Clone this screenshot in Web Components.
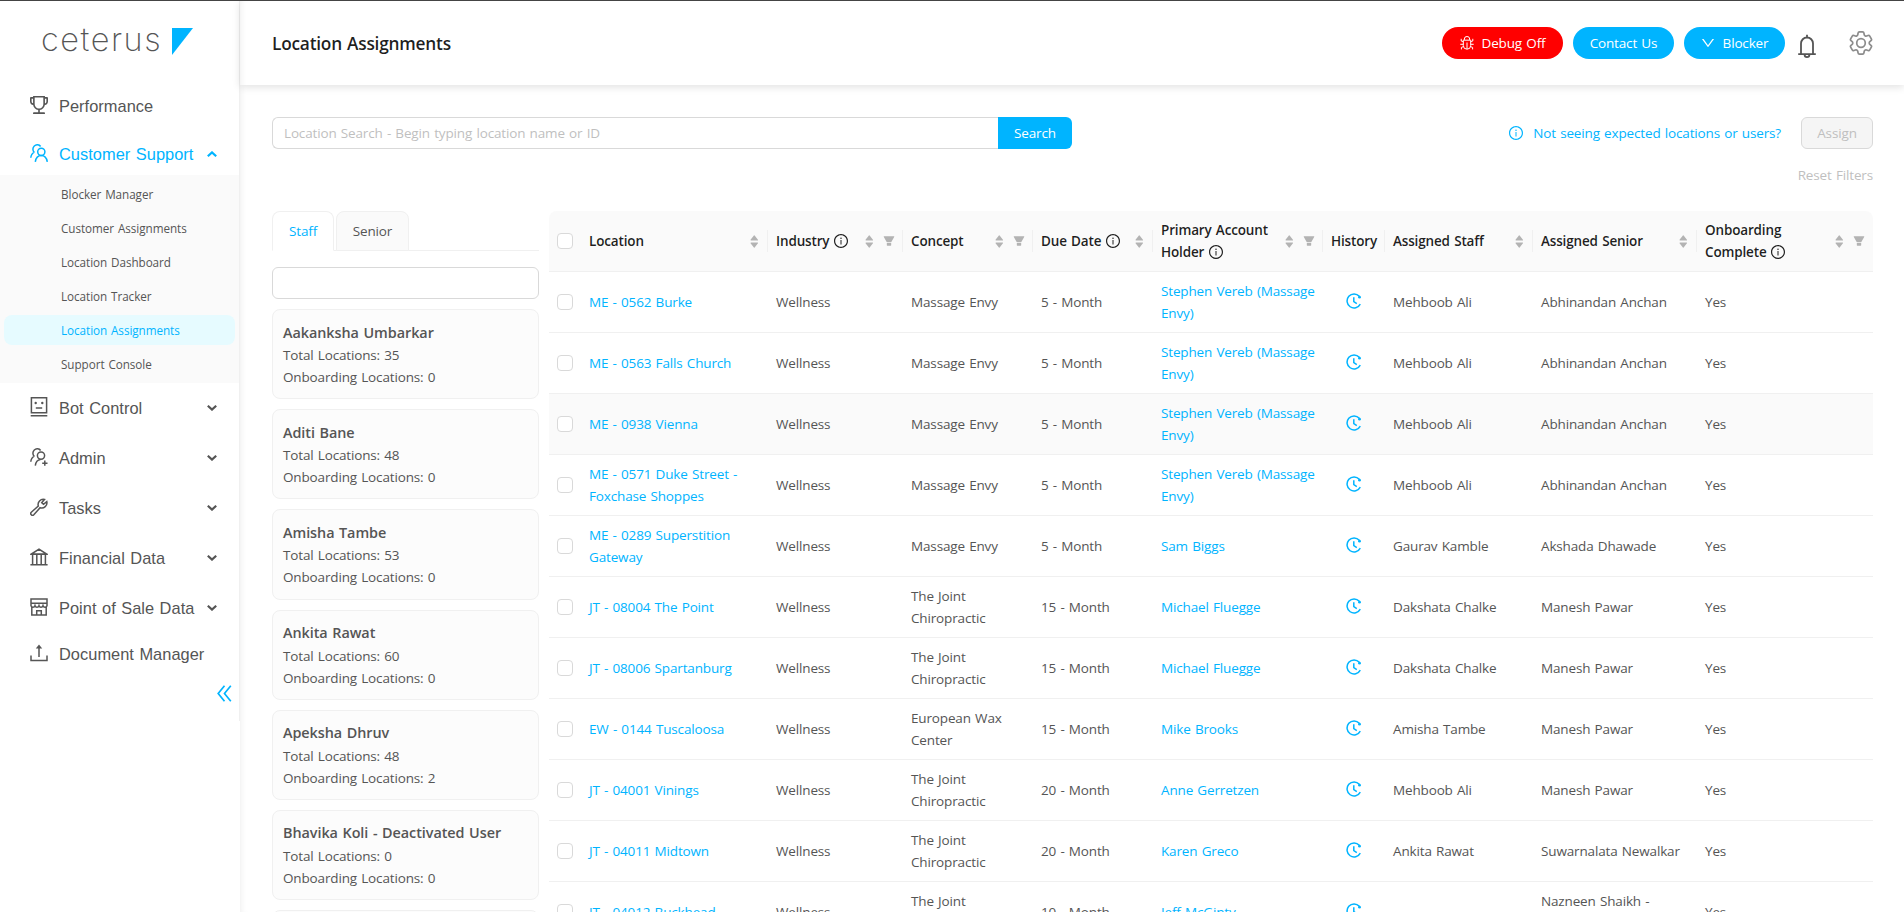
<!DOCTYPE html>
<html lang="en">
<head>
<meta charset="utf-8">
<title>Location Assignments</title>
<style>
  html, body {
    margin: 0;
    height: 100%;
  }
  body {
    overflow: hidden;
    background: #fff;
    color: #555;
    font-family: "Open Sans", "Noto Sans", sans-serif;
    font-size: 13.5px;
    line-height: 22px;
    letter-spacing: -0.15px;
    word-spacing: 0.9px;
    --primary: #00b4ff;
    --line: #f0f0f0;
    --border: #d9d9d9;
  }
</style>
</head>
<body>
<app-shell>
  <app-sidebar slot="sidebar">
    <nav-item icon="trophy" label="Performance" style="--h: 48px"></nav-item>
    <nav-item icon="users" label="Customer Support" arrow="up" active style="--h: 45px; --shift: 2px"></nav-item>
    <nav-submenu>
      <nav-subitem>Blocker Manager</nav-subitem>
      <nav-subitem>Customer Assignments</nav-subitem>
      <nav-subitem>Location Dashboard</nav-subitem>
      <nav-subitem>Location Tracker</nav-subitem>
      <nav-subitem selected>Location Assignments</nav-subitem>
      <nav-subitem>Support Console</nav-subitem>
    </nav-submenu>
    <nav-item icon="robot" label="Bot Control" arrow="down"></nav-item>
    <nav-item icon="useradd" label="Admin" arrow="down"></nav-item>
    <nav-item icon="wrench" label="Tasks" arrow="down"></nav-item>
    <nav-item icon="bank" label="Financial Data" arrow="down"></nav-item>
    <nav-item icon="shop" label="Point of Sale Data" arrow="down"></nav-item>
    <nav-item icon="upload" label="Document Manager" style="--h: 42px"></nav-item>
  </app-sidebar>

  <app-header slot="header" heading="Location Assignments">
    <pill-button icon="bug" style="--bg: #f00; --w: 121px; --gap: 8px">Debug Off</pill-button>
    <pill-button style="--w: 101px">Contact Us</pill-button>
    <pill-button icon="down" style="--w: 101px; --gap: 8px">Blocker</pill-button>
  </app-header>

  <search-bar></search-bar>
  <div class="content">
    <staff-panel></staff-panel>
    <location-table></location-table>
  </div>
</app-shell>

<script>
const ICONS = {
  trophy: ['112 112 800 800', '<path d="M868 160h-92v-40c0-4.4-3.6-8-8-8H256c-4.4 0-8 3.6-8 8v40h-92a44 44 0 00-44 44v148c0 81.7 60 149.6 138.2 162C265.6 630.2 359 721.8 476 734.5v105.2H280c-17.7 0-32 14.3-32 32V904c0 4.4 3.6 8 8 8h512c4.4 0 8-3.6 8-8v-32.3c0-17.7-14.3-32-32-32H548V734.5C665 721.8 758.4 630.2 773.8 514 852 501.6 912 433.7 912 352V204a44 44 0 00-44-44zM184 352V232h64v207.6a91.99 91.99 0 01-64-87.6zm520 128c0 49.1-19.1 95.4-53.9 130.1-34.8 34.8-81 53.9-130.1 53.9h-16c-49.1 0-95.4-19.1-130.1-53.9-34.8-34.8-53.9-81-53.9-130.1V184h384v296zm136-128c0 41-26.9 75.8-64 87.6V232h64v120z"/>'],
  down: ['64 64 896 896', '<path d="M884 256h-75c-5.1 0-9.9 2.5-12.9 6.6L512 654.2 227.9 262.6c-3-4.1-7.8-6.6-12.9-6.6h-75c-6.5 0-10.3 7.4-6.5 12.7l352.6 486.1c12.8 17.6 39 17.6 51.7 0l352.6-486.1c3.9-5.3.1-12.7-6.4-12.7z"/>'],
  info: ['64 64 896 896', '<path d="M512 64C264.6 64 64 264.6 64 512s200.6 448 448 448 448-200.6 448-448S759.4 64 512 64zm0 820c-205.4 0-372-166.6-372-372s166.6-372 372-372 372 166.6 372 372-166.6 372-372 372z"/><path d="M464 336a48 48 0 1096 0 48 48 0 10-96 0zm72 112h-48c-4.4 0-8 3.6-8 8v272c0 4.4 3.6 8 8 8h48c4.4 0 8-3.6 8-8V456c0-4.4-3.6-8-8-8z"/>'],
  filter: ['64 64 896 896', '<path d="M349 838c0 17.7 14.2 32 31.8 32h262.4c17.6 0 31.8-14.3 31.8-32V642H349v196zm531.1-684H143.9c-24.5 0-39.8 26.7-27.5 48l221.3 376h348.8l221.3-376c12.1-21.3-3.2-48-27.7-48z"/>'],
  sorter: ['0 0 8 14', '<path d="M0 5.2 3.6.6q.4-.4.8 0L8 5.2q.2.6-.4.6H.4Q-.2 5.8 0 5.2zM0 8.8 3.6 13.4q.4.4.8 0L8 8.8q.2-.6-.4-.6H.4Q-.2 8.2 0 8.8z"/>'],
  users: ['0 0 18 18', '<g class="s" stroke-width="1.5"><circle cx="11.3" cy="7.8" r="3.6"/><path d="M5.3 17.8c.5-3.5 2.600-6.300 6-6.300s5.400 2.800 6 6.300M4.300 8.300C2.400 6.500 2.500 3.700 4.300 2c1.900-1.800 5-1.700 6.300.5M.8 13.800c.2-2.600 1.300-4.700 3.700-5.700"/></g>'],
  useradd: ['0 0 18 18', '<g class="s" stroke-width="1.5"><circle cx="11" cy="7.6" r="3.6"/><path d="M5.300 17.600c.4-3.400 2.400-5.900 5.200-6.200M4.300 8.300C2.400 6.500 2.500 3.700 4.300 2c1.900-1.800 5-1.700 6.300.5M.8 13.800c.2-2.600 1.300-4.700 3.700-5.700M14.800 12.600v5.200M12.200 15.200h5.300"/></g>'],
  robot: ['0 0 18 20', '<g class="s" stroke-width="1.5"><path d="M1.4.8h15.200v15H1.400zM.7 18.800h16.600M5.800 11h6.400"/></g><circle cx="5.7" cy="6" r="1.2"/><circle cx="12.3" cy="6" r="1.2"/>'],
  wrench: ['0 0 18 18', '<path class="s" stroke-width="1.5" d="M14.500 1.500A5.200 5.200 0 0 0 8.300 8L1.300 14.300a1.600 1.600 0 0 0 2.500 2.500l6.300-7.100a5.200 5.200 0 0 0 6.700-6.100l-3.300 2.700-1.800-1.600z"/>'],
  bank: ['0 0 18 18', '<g class="s" stroke-width="1.5"><path d="M1.500 6 9 1.200 16.500 6zM.4 6.200h17.200M.4 16.800h17.200M2.600 6v10.500M6.800 6v10.500M11.200 6v10.500M15.400 6v10.500"/></g>'],
  shop: ['0 0 18 18', '<g class="s" stroke-width="1.5"><path d="M1 .9h16v4.300H1zM1 5v2.700c.6 2 3.400 2 4 0 .6 2 3.400 2 4 0 .6 2 3.400 2 4 0 .6 2 3.400 2 4 0V5M1.800 9v8.100h14.400V9M6.700 17v-4.200h4.600V17"/></g>'],
  upload: ['0 0 18 18', '<g class="s" stroke-width="1.5"><path d="M1 11.500v5h16v-5M9 13V2.500"/></g><path d="M5.800 4.600 9 .6l3.200 4z"/>'],
  collapse: ['0 0 15 17', '<path class="s" stroke-width="1.7" d="M7.500.8 1.200 8.500l6.300 7.700M13.800.8 7.500 8.500l6.300 7.700"/>'],
  chevdown: ['0 0 10 6', '<path class="s" stroke-width="2.2" d="M.8.8 5 4.600 9.200.8"/>'],
  chevup: ['0 0 10 6', '<path class="s" stroke-width="2.2" d="M.8 5.200 5 1.400l4.200 3.800"/>'],
  bug: ['0 0 14 14', '<g class="s" stroke-width="1"><path d="M3.300 4.200h7.400v5.300a3.700 3.700 0 0 1-7.400 0zM4.300 4V3a2.700 2.500 0 0 1 5.400 0v1M7 6.500V13M3.300 5.600 1.200 5V2.800M10.700 5.600l2.100-.6V2.800M3.300 8.300H.3M10.700 8.300h3M3.500 10.600l-2.100.8v2M10.500 10.600l2.100.8v2"/></g>'],
  bell: ['0 0 18 24', '<g class="s" stroke-width="1.8"><path d="M3 20V9.500a6 6 0 0 1 12 0V20M.2 20.200h17.600M9 .8v2.400M6.600 20.800a2.400 2.300 0 0 0 4.800 0"/></g>'],
  gear: ['2.2 2.2 19.6 19.6', '<g class="s" stroke-width="1.4"><path d="M9.594 3.94c.09-.542.56-.94 1.11-.94h2.593c.55 0 1.02.398 1.11.94l.213 1.281c.063.374.313.686.645.87.074.04.147.083.22.127.325.196.72.257 1.075.124l1.217-.456a1.125 1.125 0 0 1 1.37.49l1.296 2.247a1.125 1.125 0 0 1-.26 1.431l-1.003.827c-.293.241-.438.613-.43.992a7.723 7.723 0 0 1 0 .255c-.008.378.137.75.43.991l1.004.827c.424.35.534.955.26 1.43l-1.298 2.247a1.125 1.125 0 0 1-1.369.491l-1.217-.456c-.355-.133-.75-.072-1.076.124a6.47 6.47 0 0 1-.22.128c-.331.183-.581.495-.644.869l-.213 1.281c-.09.543-.56.94-1.11.94h-2.594c-.55 0-1.019-.398-1.11-.94l-.213-1.281c-.062-.374-.312-.686-.644-.87a6.52 6.52 0 0 1-.22-.127c-.325-.196-.72-.257-1.076-.124l-1.217.456a1.125 1.125 0 0 1-1.369-.49l-1.297-2.247a1.125 1.125 0 0 1 .26-1.431l1.004-.827c.292-.24.437-.613.43-.991a6.932 6.932 0 0 1 0-.255c.007-.38-.138-.751-.43-.992l-1.004-.827a1.125 1.125 0 0 1-.26-1.43l1.297-2.247a1.125 1.125 0 0 1 1.37-.491l1.216.456c.356.133.751.072 1.076-.124.072-.044.146-.086.22-.128.332-.183.582-.495.644-.869z"/><circle cx="12" cy="12" r="3.5"/></g>'],
  history: ['0 0 16 16', '<g class="s" stroke-width="1.5"><path d="M13.300 3.300A7 7 0 1 0 14.300 11.200M7.800 4.300v4.300l3 2"/></g><circle cx="13.5" cy="4.2" r="1.4"/>'],
};

class UiIcon extends HTMLElement {
  constructor() {
    super();
    this.attachShadow({ mode: 'open' });
  }

  connectedCallback() {
    const [box, body] = ICONS[this.getAttribute('name')];
    const w = this.getAttribute('w') || 14;
    const h = this.getAttribute('h') || w;
    this.shadowRoot.innerHTML = `
      <style>
        :host { display: inline-flex; flex: none; }
        svg { display: block; fill: currentColor; }
        .s { fill: none; stroke: currentColor; }
      </style>
      <svg width="${w}" height="${h}" viewBox="${box}">${body}</svg>
    `;
  }
}

class AppShell extends HTMLElement {
  constructor() {
    super();
    this.attachShadow({ mode: 'open' }).innerHTML = `
      <style>
        :host {
          display: flex;
          height: 100vh;
          box-sizing: border-box;
          border-top: 1px solid #444;
          overflow: hidden;
        }
        .main {
          flex: 1;
          min-width: 0;
          display: flex;
          flex-direction: column;
          box-shadow: inset 6px 0 6px -5px rgba(0, 0, 0, 0.07);
        }
        .page {
          flex: 1;
          min-height: 0;
          padding: 32px 31px 0 32px;
        }
        ::slotted(.content) {
          display: flex;
          align-items: flex-start;
          gap: 10px;
          margin-top: 25px;
        }
      </style>
      <slot name="sidebar"></slot>
      <div class="main">
        <slot name="header"></slot>
        <div class="page"><slot></slot></div>
      </div>
    `;
  }
}

class AppSidebar extends HTMLElement {
  constructor() {
    super();
    this.attachShadow({ mode: 'open' }).innerHTML = `
      <style>
        :host {
          display: block;
          flex: none;
          width: 240px;
          height: 720px;
          box-sizing: border-box;
          border-right: 1px solid #f0f0f0;
        }
        .logo {
          display: flex;
          align-items: flex-start;
          height: 81px;
          box-sizing: border-box;
          padding: 19px 0 0 41px;
        }
        .word {
          width: 130px;
          color: #555;
          font: 200 32.5px/40px Inter, sans-serif;
          letter-spacing: 1.55px;
        }
        .mark { margin: 8px 0 0 1px; }
        .collapse {
          display: flex;
          justify-content: flex-end;
          padding: 10px 7px 0 0;
          color: var(--primary);
        }
      </style>
      <div class="logo">
        <span class="word">ceterus</span>
        <svg class="mark" width="21" height="27" viewBox="0 0 21 27"><path fill="#00b4ff" d="M0 0h21L0 27z"/></svg>
      </div>
      <slot></slot>
      <div class="collapse"><ui-icon name="collapse" w="15" h="17"></ui-icon></div>
    `;
  }
}

class NavItem extends HTMLElement {
  constructor() {
    super();
    this.attachShadow({ mode: 'open' });
  }

  connectedCallback() {
    const arrow = this.getAttribute('arrow');
    const icon = this.getAttribute('icon');
    this.shadowRoot.innerHTML = `
      <style>
        :host {
          display: flex;
          align-items: center;
          height: var(--h, 50px);
          box-sizing: border-box;
          padding: var(--shift, 0) 22px 0 30px;
          color: #555;
          font: 16.4px/24px "Liberation Sans", Arial, sans-serif;
          letter-spacing: 0.03px;
        }
        :host([active]) { color: var(--primary); }
        .icon { margin: -2px 11px 0 0; }
        .label { flex: 1; white-space: nowrap; }
      </style>
      <ui-icon class="icon" name="${icon}" w="18" h="${icon === 'robot' ? 20 : 18}"></ui-icon>
      <span class="label">${this.getAttribute('label')}</span>
      ${arrow ? `<ui-icon name="chev${arrow}" w="10" h="6"></ui-icon>` : ''}
    `;
  }
}

class NavSubmenu extends HTMLElement {
  constructor() {
    super();
    this.attachShadow({ mode: 'open' }).innerHTML = `
      <style>
        :host {
          display: flex;
          flex-direction: column;
          gap: 4px;
          padding: 4px;
          background: #fafafa;
        }
      </style>
      <slot></slot>
    `;
  }
}

class NavSubitem extends HTMLElement {
  constructor() {
    super();
    this.attachShadow({ mode: 'open' }).innerHTML = `
      <style>
        :host {
          display: block;
          height: 30px;
          padding-left: 57px;
          border-radius: 8px;
          font-size: 11.7px;
          line-height: 30px;
          letter-spacing: -0.05px;
        }
        :host([selected]) {
          background: #e6fbff;
          color: var(--primary);
        }
      </style>
      <slot></slot>
    `;
  }
}

class AppHeader extends HTMLElement {
  constructor() {
    super();
    this.attachShadow({ mode: 'open' });
  }

  connectedCallback() {
    this.shadowRoot.innerHTML = `
      <style>
        :host {
          display: flex;
          align-items: center;
          flex: none;
          height: 84px;
          box-sizing: border-box;
          padding: 0 31px 0 32px;
          box-shadow: 0 2px 8px rgba(0, 0, 0, 0.12);
        }
        h1 {
          flex: 1;
          margin: 2px 0 0;
          color: rgba(0, 0, 0, 0.88);
          font-size: 17.3px;
          font-weight: 600;
          letter-spacing: -0.23px;
        }
        .buttons { display: flex; gap: 10px; }
        .bell { margin: 5px 33px 0 13px; }
        .gear { color: #8c8c8c; }
      </style>
      <h1>${this.getAttribute('heading')}</h1>
      <div class="buttons"><slot></slot></div>
      <ui-icon class="bell" name="bell" w="18" h="24"></ui-icon>
      <ui-icon class="gear" name="gear" w="24" h="24"></ui-icon>
    `;
  }
}

class PillButton extends HTMLElement {
  constructor() {
    super();
    this.attachShadow({ mode: 'open' });
  }

  connectedCallback() {
    const icon = this.getAttribute('icon');
    this.shadowRoot.innerHTML = `
      <style>
        :host {
          display: flex;
          align-items: center;
          justify-content: center;
          gap: var(--gap, 0);
          width: var(--w);
          height: 32px;
          border-radius: 16px;
          background: var(--bg, var(--primary));
          color: #fff;
        }
      </style>
      ${icon ? `<ui-icon name="${icon}" w="14"></ui-icon>` : ''}
      <span><slot></slot></span>
    `;
  }
}

class SearchBar extends HTMLElement {
  constructor() {
    super();
    this.attachShadow({ mode: 'open' }).innerHTML = `
      <style>
        :host { display: block; }
        .row { display: flex; align-items: center; height: 32px; }
        .input {
          width: 726px;
          height: 32px;
          box-sizing: border-box;
          padding: 4px 11px;
          border: 1px solid var(--border);
          border-right: 0;
          border-radius: 6px 0 0 6px;
          color: #bfbfbf;
        }
        .go {
          width: 74px;
          height: 32px;
          border-radius: 0 6px 6px 0;
          background: var(--primary);
          color: #fff;
          line-height: 32px;
          text-align: center;
        }
        .help {
          display: flex;
          align-items: center;
          gap: 10px;
          margin: 0 20px 0 auto;
          color: var(--primary);
        }
        .assign {
          width: 72px;
          height: 32px;
          box-sizing: border-box;
          border: 1px solid var(--border);
          border-radius: 6px;
          background: #f5f5f5;
          color: #bfbfbf;
          line-height: 30px;
          text-align: center;
        }
        .reset {
          margin-top: 15px;
          color: #bfbfbf;
          text-align: right;
        }
      </style>
      <div class="row">
        <div class="input">Location Search - Begin typing location name or ID</div>
        <div class="go">Search</div>
        <div class="help"><ui-icon name="info" w="14"></ui-icon><span>Not seeing expected locations or users?</span></div>
        <div class="assign">Assign</div>
      </div>
      <div class="reset">Reset Filters</div>
    `;
  }
}

class StaffCard extends HTMLElement {
  constructor() {
    super();
    this.attachShadow({ mode: 'open' }).innerHTML = `
      <style>
        :host {
          display: block;
          height: 90.2px;
          box-sizing: border-box;
          padding: 10.5px 10px;
          border: 1px solid var(--line);
          border-radius: 8px;
          background: #fcfcfc;
        }
        .name {
          font-size: 14.4px;
          font-weight: 600;
          line-height: 23.6px;
          letter-spacing: -0.05px;
        }
      </style>
      <div class="name"><slot name="name"></slot></div>
      <slot></slot>
    `;
  }
}

class StaffPanel extends HTMLElement {
  constructor() {
    super();
    this.attachShadow({ mode: 'open' });
    this.staff = [
      ['Aakanksha Umbarkar', 35, 0],
      ['Aditi Bane', 48, 0],
      ['Amisha Tambe', 53, 0],
      ['Ankita Rawat', 60, 0],
      ['Apeksha Dhruv', 48, 2],
      ['Bhavika Koli - Deactivated User', 0, 0],
    ];
  }

  connectedCallback() {
    this.shadowRoot.innerHTML = `
      <style>
        :host { display: block; flex: none; width: 267px; }
        .tabs {
          display: flex;
          gap: 2px;
          height: 40px;
          margin-bottom: 16px;
          box-shadow: inset 0 -1px var(--line);
        }
        .tab {
          box-sizing: border-box;
          width: 73px;
          height: 40px;
          border: 1px solid var(--line);
          border-radius: 8px 8px 0 0;
          background: #fafafa;
          line-height: 38px;
          text-align: center;
        }
        .tab.on {
          width: 62px;
          border-bottom-color: #fff;
          background: #fff;
          color: var(--primary);
        }
        .filter {
          height: 32px;
          box-sizing: border-box;
          border: 1px solid var(--border);
          border-radius: 6px;
        }
        .cards {
          display: flex;
          flex-direction: column;
          gap: 10px;
          margin-top: 10px;
        }
      </style>
      <div class="tabs"><div class="tab on">Staff</div><div class="tab">Senior</div></div>
      <div class="filter"></div>
      <div class="cards">
        ${this.staff.map(([name, total, onboarding]) => `
          <staff-card>
            <span slot="name">${name}</span>
            <div>Total Locations: ${total}</div>
            <div>Onboarding Locations: ${onboarding}</div>
          </staff-card>
        `).join('')}
        <staff-card></staff-card>
      </div>
    `;
  }
}

class LocationTable extends HTMLElement {
  constructor() {
    super();
    this.attachShadow({ mode: 'open' });

    // label, width, info icon, sortable, filterable
    this.columns = [
      ['Location', 187, false, true, false],
      ['Industry', 135, true, true, true],
      ['Concept', 130, false, true, true],
      ['Due Date', 120, true, true, false],
      ['Primary Account Holder', 170, true, true, true],
      ['History', 62, false, false, false],
      ['Assigned Staff', 148, false, true, false],
      ['Assigned Senior', 164, false, true, false],
      ['Onboarding Complete', 176, true, true, true],
    ];

    // location, concept, due day, account holder, staff, senior
    this.rows = [
      ['ME - 0562 Burke', 'Massage Envy', 5, 'Stephen Vereb (Massage<br>Envy)', 'Mehboob Ali', 'Abhinandan Anchan'],
      ['ME - 0563 Falls Church', 'Massage Envy', 5, 'Stephen Vereb (Massage<br>Envy)', 'Mehboob Ali', 'Abhinandan Anchan'],
      ['ME - 0938 Vienna', 'Massage Envy', 5, 'Stephen Vereb (Massage<br>Envy)', 'Mehboob Ali', 'Abhinandan Anchan'],
      ['ME - 0571 Duke Street -<br>Foxchase Shoppes', 'Massage Envy', 5, 'Stephen Vereb (Massage<br>Envy)', 'Mehboob Ali', 'Abhinandan Anchan'],
      ['ME - 0289 Superstition<br>Gateway', 'Massage Envy', 5, 'Sam Biggs', 'Gaurav Kamble', 'Akshada Dhawade'],
      ['JT - 08004 The Point', 'The Joint<br>Chiropractic', 15, 'Michael Fluegge', 'Dakshata Chalke', 'Manesh Pawar'],
      ['JT - 08006 Spartanburg', 'The Joint<br>Chiropractic', 15, 'Michael Fluegge', 'Dakshata Chalke', 'Manesh Pawar'],
      ['EW - 0144 Tuscaloosa', 'European Wax<br>Center', 15, 'Mike Brooks', 'Amisha Tambe', 'Manesh Pawar'],
      ['JT - 04001 Vinings', 'The Joint<br>Chiropractic', 20, 'Anne Gerretzen', 'Mehboob Ali', 'Manesh Pawar'],
      ['JT - 04011 Midtown', 'The Joint<br>Chiropractic', 20, 'Karen Greco', 'Ankita Rawat', 'Suwarnalata Newalkar'],
      ['JT - 04012 Buckhead', 'The Joint<br>Chiropractic', 10, 'Jeff McGinty', '', 'Nazneen Shaikh -<br>Deactivated User'],
    ];
  }

  headCell([label, , info, sort, filter]) {
    // keep the info icon on the same line as the last word
    const words = label.split(' ');
    const last = words.pop();
    const tail = info ? `<span class="nowrap">${last} <ui-icon class="info" name="info" w="14"></ui-icon></span>` : last;
    return `
      <th><div class="head">
        <span class="title">${[...words, tail].join(' ')}</span>
        ${sort ? '<ui-icon class="tool" name="sorter" w="8.5" h="13"></ui-icon>' : ''}
        ${filter ? '<ui-icon class="tool" name="filter" w="12"></ui-icon>' : ''}
      </div></th>
    `;
  }

  bodyRow([location, concept, due, holder, staff, senior], index) {
    return `
      <tr class="${index === 2 ? 'hover' : ''}">
        <td><div class="box"></div></td>
        <td><a>${location}</a></td>
        <td>Wellness</td>
        <td>${concept}</td>
        <td>${due} - Month</td>
        <td><a>${holder}</a></td>
        <td><div class="history"><ui-icon name="history" w="16"></ui-icon></div></td>
        <td>${staff}</td>
        <td>${senior}</td>
        <td>Yes</td>
      </tr>
    `;
  }

  connectedCallback() {
    this.shadowRoot.innerHTML = `
      <style>
        :host { display: block; flex: none; width: 1324px; }
        table {
          width: 1324px;
          table-layout: fixed;
          border-collapse: separate;
          border-spacing: 0;
        }
        th, td {
          height: 61px;
          box-sizing: border-box;
          padding: 8px;
          border-bottom: 1px solid var(--line);
          text-align: left;
          vertical-align: middle;
          white-space: nowrap;
        }
        th {
          padding-right: 0;
          background: #fafafa;
          color: rgba(0, 0, 0, 0.88);
          font-weight: 600;
        }
        th:first-child { border-top-left-radius: 8px; }
        th:last-child { border-top-right-radius: 8px; }
        .head {
          display: flex;
          align-items: center;
          height: 22px;
          padding-right: 9px;
          border-right: 1px solid var(--line);
        }
        th:last-child .head { border-color: transparent; }
        .title { flex: 1; white-space: normal; }
        .nowrap { white-space: nowrap; }
        .info { vertical-align: -2px; }
        .tool { color: #b3b3b3; }
        .tool + .tool { margin: 0 -2px 0 10px; }
        .hover td { background: #fafafa; }
        .box {
          width: 16px;
          height: 16px;
          box-sizing: border-box;
          border: 1px solid var(--border);
          border-radius: 4px;
          background: #fff;
        }
        .history { display: flex; justify-content: center; margin-top: -2px; }
        a, .history { color: var(--primary); }
      </style>
      <table>
        <colgroup>
          <col style="width: 32px">
          ${this.columns.map(([, width]) => `<col style="width: ${width}px">`).join('')}
        </colgroup>
        <thead><tr><th><div class="box"></div></th>${this.columns.map(c => this.headCell(c)).join('')}</tr></thead>
        <tbody>${this.rows.map((r, i) => this.bodyRow(r, i)).join('')}</tbody>
      </table>
    `;
  }
}

customElements.define('ui-icon', UiIcon);
customElements.define('app-shell', AppShell);
customElements.define('app-sidebar', AppSidebar);
customElements.define('nav-item', NavItem);
customElements.define('nav-submenu', NavSubmenu);
customElements.define('nav-subitem', NavSubitem);
customElements.define('app-header', AppHeader);
customElements.define('pill-button', PillButton);
customElements.define('search-bar', SearchBar);
customElements.define('staff-card', StaffCard);
customElements.define('staff-panel', StaffPanel);
customElements.define('location-table', LocationTable);
</script>
</body>
</html>
